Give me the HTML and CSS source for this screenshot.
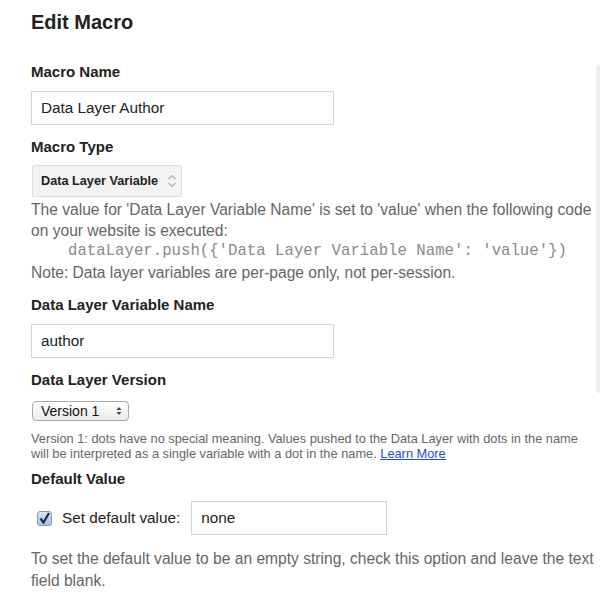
FILE: index.html
```html
<!DOCTYPE html>
<html lang="en">
<head>
    <meta charset="UTF-8">
    <meta name="viewport" content="width=device-width, initial-scale=1.0">
    <title>Edit Macro</title>
    <link rel="stylesheet" href="styles.css">
</head>
<body>
    <div class="edge"></div>
    <div class="container">
        <h1>Edit Macro</h1>

        <div class="label first">Macro Name</div>
        <div class="field wide">Data Layer Author</div>

        <div class="label">Macro Type</div>
        <div class="picker">
            <span>Data Layer Variable</span>
            <svg width="10" height="16" viewBox="0 0 10 16"><path d="M1.5 6 L5 2.5 L8.5 6 M1.5 10 L5 13.5 L8.5 10" fill="none" stroke="#b0b0b0" stroke-width="1.2"/></svg>
        </div>
        <div class="help">
            The value for 'Data Layer Variable Name' is set to 'value' when the following code on your website is executed:
            <div class="code">dataLayer.push({'Data Layer Variable Name': 'value'})</div>
            Note: Data layer variables are per-page only, not per-session.
        </div>

        <div class="label">Data Layer Variable Name</div>
        <div class="field wide">author</div>

        <div class="label">Data Layer Version</div>
        <div class="macselect">
            <span>Version 1</span>
            <svg width="6" height="10" viewBox="0 0 6 10"><path d="M0.5 4 L3 1 L5.5 4 Z M0.5 6 L3 9 L5.5 6 Z" fill="#444"/></svg>
        </div>
        <div class="small">
            Version 1: dots have no special meaning. Values pushed to the Data Layer with dots in the name will be interpreted as a single variable with a dot in the name. <a href="#">Learn More</a>
        </div>

        <div class="label after-small">Default Value</div>
        <div class="row">
            <span class="check">
                <svg width="13" height="13" viewBox="0 0 13 13"><path d="M2.5 6.5 L5.5 10.5 L11 1" fill="none" stroke="#1f2a44" stroke-width="2.2"/></svg>
            </span>
            <span class="rowtext">Set default value:</span>
            <div class="field short">none</div>
        </div>
        <div class="help last">
            To set the default value to be an empty string, check this option and leave the text field blank.
        </div>
    </div>
</body>
</html>
```

FILE: styles.css
```css
body {
    margin: 0;
    font-family: "Liberation Sans", Arial, sans-serif;
    color: #222;
    background-color: #fff;
    overflow: hidden;
}

.edge {
    position: absolute;
    top: 65px;
    right: 0;
    width: 4px;
    height: 328px;
    background-color: #ececec;
    border-radius: 4px 0 0 4px;
}

.container {
    width: 568px;
    padding-left: 31px;
}

h1 {
    font-size: 20px;
    line-height: 24px;
    margin: 10px 0 0 0;
}

.label {
    font-size: 15px;
    font-weight: bold;
    line-height: 20px;
    margin-top: 12px;
}
.label.first {
    margin-top: 28px;
}
.label.after-small {
    margin-top: 8px;
}

.field {
    box-sizing: border-box;
    height: 34px;
    border: 1px solid #d4d4d4;
    padding: 0 9px;
    font-size: 15.3px;
    line-height: 32px;
    color: #222;
}
.wide {
    width: 303px;
    margin-top: 9px;
}

.picker {
    box-sizing: border-box;
    display: flex;
    align-items: center;
    justify-content: space-between;
    width: 150px;
    height: 32px;
    margin: 8px 0 0 1px;
    padding: 0 4px 0 8px;
    background-color: #f3f3f3;
    border: 1px solid #dcdcdc;
    border-radius: 2px;
    font-size: 12.7px;
    font-weight: bold;
    color: #222;
}

.help {
    font-size: 15.6px;
    line-height: 21px;
    color: #666;
    margin-top: 2px;
}
.help.last {
    line-height: 22px;
    margin-top: 13px;
}

.code {
    font-family: "Liberation Mono", "Courier New", monospace;
    font-size: 15.7px;
    color: #8a8a8a;
    padding-left: 37px;
}

.macselect {
    box-sizing: border-box;
    display: flex;
    align-items: center;
    justify-content: space-between;
    width: 97px;
    height: 20px;
    margin: 11px 0 0 1px;
    padding: 0 6px 0 8px;
    border: 1px solid #a8a8a8;
    border-radius: 4px;
    background: linear-gradient(#ffffff, #ececec);
    font-size: 14px;
    color: #111;
}

.small {
    font-size: 12.8px;
    line-height: 15px;
    color: #666;
    margin-top: 10px;
}
.small a {
    color: #1a4fd0;
}

.row {
    display: flex;
    align-items: center;
    margin-top: 12px;
}
.check {
    box-sizing: border-box;
    display: flex;
    align-items: center;
    justify-content: center;
    width: 15px;
    height: 15px;
    margin-left: 6px;
    border: 1px solid #8a9bb5;
    border-radius: 3px;
    background: linear-gradient(#d6e6fa, #9cc2f0);
}
.rowtext {
    font-size: 15.3px;
    color: #222;
    margin-left: 10px;
}
.field.short {
    width: 196px;
    margin-left: 11px;
}
```
